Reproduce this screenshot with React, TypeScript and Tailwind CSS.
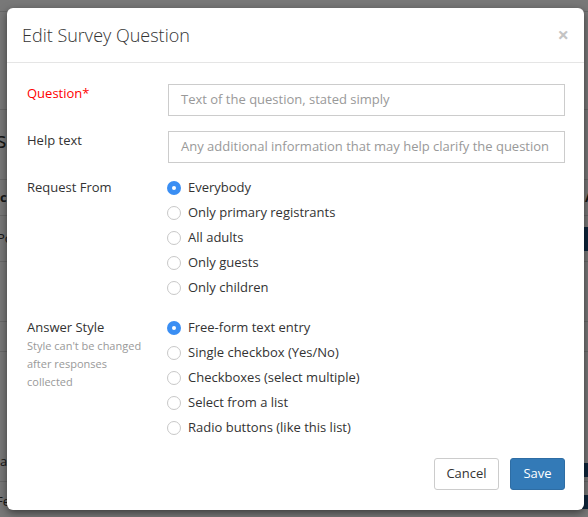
import React from "react";

function Radio({ checked, label }: { checked?: boolean; label: string }) {
  return (
    <div className="flex h-[25px] items-center">
      {checked ? (
        <span className="-ml-[1px] mr-[7px] flex h-[14px] w-[14px] items-center justify-center rounded-full bg-[#3a8ef3]">
          <span className="h-[4px] w-[4px] rounded-full bg-white" />
        </span>
      ) : (
        <span className="-ml-[1px] mr-[7px] h-[14px] w-[14px] rounded-full border border-[#c8c8c8] bg-white" />
      )}
      <span className="text-[13px] text-[#333]">{label}</span>
    </div>
  );
}

function BgRow({ h, children }: { h: number; children?: React.ReactNode }) {
  return (
    <div className="flex items-center border-b border-[#ddd]" style={{ height: h }}>
      {children}
    </div>
  );
}

export default function App() {
  return (
    <div className="relative h-[517px] w-[588px] overflow-hidden bg-white font-['Open_Sans',sans-serif]">
      {/* page behind the modal */}
      <div className="flex flex-col text-[#333]">
        <BgRow h={12} />
        <div className="h-[76px]" />
        <BgRow h={22} />
        <div className="flex h-[58px] items-center">
          <span className="-ml-[4px] text-[22px]">s</span>
        </div>
        <BgRow h={12} />
        <BgRow h={36}>
          <span className="-ml-[4px] text-[13px] font-bold">ic</span>
          <span className="ml-auto -mr-[6px] text-[13px] font-bold">A</span>
        </BgRow>
        <BgRow h={46}>
          <span className="-ml-[3px] text-[13px]">Po</span>
          <span className="ml-auto h-[24px] w-[6px] bg-[#1e4f80]" />
        </BgRow>
        <div className="h-[20px]" />
        <BgRow h={40} />
        <BgRow h={30} />
        <div className="h-[90px]" />
        <BgRow h={40}>
          <span className="-ml-[8px] text-[13px]">ua</span>
          <span className="ml-auto mt-[16px] h-[14px] w-[6px] bg-[#1e4f80]" />
        </BgRow>
        <BgRow h={40}>
          <span className="-ml-[4px] text-[13px]">Fe</span>
          <span className="ml-auto h-[14px] w-[6px] bg-[#1e4f80]" />
        </BgRow>
      </div>
      <div className="absolute inset-0 bg-black/[0.53]" />

      {/* modal */}
      <div className="absolute left-[7px] top-[8px] flex h-[502px] w-[577px] flex-col rounded-[6px] bg-white shadow-[0_3px_9px_rgba(0,0,0,0.5)]">
        <div className="flex h-[55px] items-center justify-between border-b border-[#e5e5e5] pl-[15px] pr-[15px]">
          <h4 className="text-[18px] font-light text-[#333]">Edit Survey Question</h4>
          <span className="text-[20px] font-bold leading-none text-[#c4c4c4]">×</span>
        </div>

        <div className="flex flex-col pl-[20px] pr-[19px] pt-[21px]">
          <div className="flex items-start">
            <label className="w-[141px] text-[13px] leading-[18px] text-[#f00]">Question*</label>
            <div className="flex h-[32px] flex-1 items-center border border-[#ccc] px-[12px] text-[13px] text-[#999]">
              Text of the question, stated simply
            </div>
          </div>

          <div className="mt-[15px] flex items-start">
            <label className="w-[141px] text-[13px] leading-[18px] text-[#333]">Help text</label>
            <div className="flex h-[32px] flex-1 items-center border border-[#ccc] px-[12px] text-[13px] text-[#999]">
              Any additional information that may help clarify the question
            </div>
          </div>

          <div className="mt-[12px] flex items-start">
            <label className="w-[141px] text-[13px] leading-[25px] text-[#333]">Request From</label>
            <div className="flex flex-col">
              <Radio checked label="Everybody" />
              <Radio label="Only primary registrants" />
              <Radio label="All adults" />
              <Radio label="Only guests" />
              <Radio label="Only children" />
            </div>
          </div>

          <div className="mt-[15px] flex items-start">
            <div className="flex w-[141px] flex-col">
              <label className="text-[13px] leading-[25px] text-[#333]">Answer Style</label>
              <p className="-mt-[3px] w-[118px] text-[11px] leading-[18px] text-[#999]">
                Style can't be changed after responses collected
              </p>
            </div>
            <div className="flex flex-col">
              <Radio checked label="Free-form text entry" />
              <Radio label="Single checkbox (Yes/No)" />
              <Radio label="Checkboxes (select multiple)" />
              <Radio label="Select from a list" />
              <Radio label="Radio buttons (like this list)" />
            </div>
          </div>

          <div className="mt-[18px] flex justify-end gap-[11px]">
            <button className="flex h-[32px] w-[65px] items-center justify-center rounded-[3px] border border-[#ccc] bg-white text-[13px] text-[#333]">
              Cancel
            </button>
            <button className="flex h-[32px] w-[55px] items-center justify-center rounded-[3px] border border-[#2e6da4] bg-[#337ab7] text-[13px] text-white">
              Save
            </button>
          </div>
        </div>
      </div>
    </div>
  );
}
